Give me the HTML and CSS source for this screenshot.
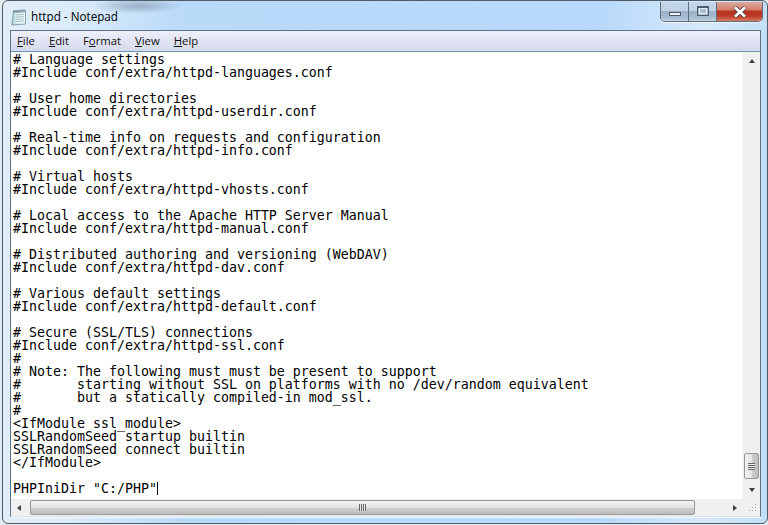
FILE: index.html
```html
<!DOCTYPE html>
<html lang="en">
<head>
<meta charset="utf-8">
<title>httpd - Notepad</title>
<link rel="stylesheet" href="styles.css">
</head>
<body>
<div class="window">
  <div class="titlebar">
    <svg class="app-icon" width="16" height="17" viewBox="0 0 16 17">
      <defs>
        <linearGradient id="page" x1="0" y1="0" x2="1" y2="0">
          <stop offset="0" stop-color="#9cc8cc"/>
          <stop offset="0.35" stop-color="#dcf0ee"/>
          <stop offset="1" stop-color="#f2fafa"/>
        </linearGradient>
      </defs>
      <path d="M2.5 2.5 L14.5 1.5 L14.5 15 L0.8 16 Z" fill="url(#page)" stroke="#84a0a8"/>
      <path d="M5 6 L13 5.3 M4.8 8.2 L13 7.5 M4.6 10.4 L13 9.7 M4.4 12.6 L13 11.9" stroke="#a9c0c8"/>
      <path d="M3 1v3M5 1v3M7 1v3M9 .8v3M11 .6v3M13 .4v3" stroke="#5e7c88" stroke-width="1"/>
    </svg>
    <span class="title">httpd - Notepad</span>
    <div class="controls">
      <div class="ctl ctl-min"><span class="min-glyph"></span></div>
      <div class="ctl ctl-max"><span class="max-glyph"></span></div>
      <div class="ctl ctl-close">
        <svg width="16" height="12" viewBox="0 0 16 12"><path d="M3 1.5 L13 10.5 M13 1.5 L3 10.5" stroke="#5a4444" stroke-width="4.4"/><path d="M3 1.5 L13 10.5 M13 1.5 L3 10.5" stroke="#fff" stroke-width="2.8"/></svg>
      </div>
    </div>
  </div>
  <div class="client">
    <nav class="menu">
      <span class="item"><u>F</u>ile</span>
      <span class="item"><u>E</u>dit</span>
      <span class="item">F<u>o</u>rmat</span>
      <span class="item"><u>V</u>iew</span>
      <span class="item"><u>H</u>elp</span>
    </nav>
    <div class="body">
      <div class="editor-row">
<pre class="editor"># Language settings
#Include conf/extra/httpd-languages.conf

# User home directories
#Include conf/extra/httpd-userdir.conf

# Real-time info on requests and configuration
#Include conf/extra/httpd-info.conf

# Virtual hosts
#Include conf/extra/httpd-vhosts.conf

# Local access to the Apache HTTP Server Manual
#Include conf/extra/httpd-manual.conf

# Distributed authoring and versioning (WebDAV)
#Include conf/extra/httpd-dav.conf

# Various default settings
#Include conf/extra/httpd-default.conf

# Secure (SSL/TLS) connections
#Include conf/extra/httpd-ssl.conf
#
# Note: The following must must be present to support
#       starting without SSL on platforms with no /dev/random equivalent
#       but a statically compiled-in mod_ssl.
#
&lt;IfModule ssl_module&gt;
SSLRandomSeed startup builtin
SSLRandomSeed connect builtin
&lt;/IfModule&gt;

PHPIniDir "C:/PHP"<span class="caret"></span></pre>
        <div class="vscroll">
          <span class="arrow arrow-up"></span>
          <div class="vtrack">
            <div class="vthumb"><span class="vgrip"></span></div>
          </div>
          <span class="arrow arrow-down"></span>
        </div>
      </div>
      <div class="hrow">
        <div class="hscroll">
          <span class="arrow arrow-left"></span>
          <div class="hthumb"><span class="hgrip"></span></div>
          <span class="arrow arrow-right"></span>
        </div>
        <div class="sizegrip">
          <svg width="17" height="17" viewBox="0 0 17 17"><path d="M12 5h1v1h-1z M9 8h1v1H9z M12 8h1v1h-1z M6 11h1v1H6z M9 11h1v1H9z M12 11h1v1h-1z" fill="#a8a8a8"/></svg>
        </div>
      </div>
    </div>
  </div>
</div>
</body>
</html>
```
FILE: styles.css
```css
html, body {
  margin: 0;
  padding: 0;
  width: 768px;
  height: 525px;
  overflow: hidden;
  background: #e4ecf1;
}

.window {
  box-sizing: border-box;
  width: 766px;
  height: 524px;
  margin-left: 2px;
  margin-top: 0;
  padding: 1px 6px 6px 7px;
  border: 1px solid #4e5c68;
  border-radius: 6px;
  background:
    radial-gradient(ellipse 45px 8px at 135px 5px, rgba(110,125,145,.5), rgba(110,125,145,0) 100%),
    linear-gradient(90deg, #e2eef8 0%, #dcecfa 8%, #b9daf9 24%, #b8d9fb 78%, #d6e9f9 92%, #c2dff5 100%);
  display: flex;
  flex-direction: column;
}

.titlebar {
  height: 28px;
  flex: none;
  display: flex;
  align-items: flex-start;
  color: #000;
}

.app-icon {
  margin: 7px 4px 0 1px;
}

.title {
  margin-top: 6px;
  font-family: "Open Sans", sans-serif;
  font-size: 11.7px;
  line-height: 17px;
}

.controls {
  margin-left: auto;
  margin-right: -2px;
  display: flex;
  height: 19px;
  margin-top: 0;
  border: 1px solid #5f6d7c;
  border-top: 0;
  border-radius: 0 0 5px 5px;
  overflow: hidden;
  box-shadow: 0 1px 0 rgba(255,255,255,.7);
}

.ctl {
  display: flex;
  align-items: center;
  justify-content: center;
}

.ctl-min, .ctl-max {
  width: 27px;
  border-right: 1px solid #5f6d7c;
  background: linear-gradient(#c3d7ea 0%, #c0d2e4 45%, #9db2c8 50%, #a9bed3 85%, #c5d6e6 100%);
}

.ctl-close {
  width: 45px;
  background: linear-gradient(#dba99d 0%, #d47f6e 40%, #b8341f 50%, #bb3c28 75%, #dc7d68 100%);
}

.min-glyph {
  width: 10px;
  height: 2px;
  margin-top: 5px;
  border: 1px solid #4c5a6c;
  background: #eef2f6;
}

.max-glyph {
  box-sizing: border-box;
  width: 12px;
  height: 10px;
  margin-top: -1px;
  border: 1px solid #4c5a6c;
  border-top-width: 2px;
  outline: 1px solid #e6edf4;
  outline-offset: -3px;
  background: #a9bccf;
}

.client {
  flex: 1;
  min-height: 0;
  display: flex;
  flex-direction: column;
  border: 1px solid #5e7186;
  border-bottom-color: #d8e4ee;
  box-shadow: 0 1px 0 #f4fafe;
}

.menu {
  height: 19px;
  padding-bottom: 1px;
  flex: none;
  display: flex;
  align-items: center;
  padding-left: 6px;
  gap: 14px;
  background: linear-gradient(#eef1fa 0%, #dfe3f2 55%, #d5daec 100%);
  border-bottom: 1px solid #6b93b2;
  font: 11.3px "Open Sans", "Liberation Sans", sans-serif;
  color: #111;
}

.body {
  flex: 1;
  min-height: 0;
  display: flex;
  flex-direction: column;
  background: #fff;
}

.editor-row {
  flex: 1;
  min-height: 0;
  display: flex;
}

.editor {
  flex: 1;
  margin: 0;
  padding: 1px 0 0 2px;
  overflow: hidden;
  font: 13.29px/13px "DejaVu Sans Mono", monospace;
  color: #000;
  background: #fff;
}

.caret {
  display: inline-block;
  width: 1px;
  height: 13px;
  vertical-align: -2px;
  background: #000;
}

.vscroll {
  width: 17px;
  flex: none;
  display: flex;
  flex-direction: column;
  align-items: center;
  background: #f0f0f0;
  border-left: 1px solid #f7f7f7;
}

.vtrack {
  flex: 1;
  width: 100%;
  display: flex;
  flex-direction: column;
  justify-content: flex-end;
  align-items: center;
  padding-bottom: 2px;
}

.vthumb {
  box-sizing: border-box;
  width: 15px;
  height: 26px;
  display: flex;
  align-items: center;
  justify-content: center;
  border: 1px solid #979797;
  border-radius: 2px;
  background: linear-gradient(90deg, #f2f2f2, #e4e4e4 50%, #cfcfcf 55%, #bdbdbd);
}

.vgrip {
  width: 7px;
  height: 7px;
  background: repeating-linear-gradient(#666 0 1px, #e8e8e8 1px 2px);
}

.hrow {
  height: 17px;
  flex: none;
  display: flex;
}

.hscroll {
  flex: 1;
  display: flex;
  align-items: center;
  background: #f0f0f0;
}

.hthumb {
  box-sizing: border-box;
  width: 665px;
  height: 15px;
  margin-left: 9px;
  display: flex;
  align-items: center;
  justify-content: center;
  border: 1px solid #979797;
  border-radius: 2px;
  background: linear-gradient(#f2f2f2, #e4e4e4 50%, #cfcfcf 55%, #bdbdbd);
}

.hgrip {
  width: 7px;
  height: 7px;
  background: repeating-linear-gradient(90deg, #666 0 1px, #e8e8e8 1px 2px);
}

.sizegrip {
  width: 17px;
  flex: none;
  background: #f0f0f0;
}

.arrow {
  flex: none;
  width: 0;
  height: 0;
}

.arrow-up {
  margin: 7px 0 6px;
  border: 3.5px solid transparent;
  border-top-width: 0;
  border-bottom: 4px solid #3f3f3f;
}

.arrow-down {
  margin: 7px 0 7px;
  border: 3.5px solid transparent;
  border-bottom-width: 0;
  border-top: 4px solid #3f3f3f;
}

.arrow-left {
  margin-left: 6px;
  border: 3.5px solid transparent;
  border-left-width: 0;
  border-right: 4px solid #3f3f3f;
}

.arrow-right {
  margin-left: auto;
  margin-right: 6px;
  border: 3.5px solid transparent;
  border-right-width: 0;
  border-left: 4px solid #3f3f3f;
}
```
